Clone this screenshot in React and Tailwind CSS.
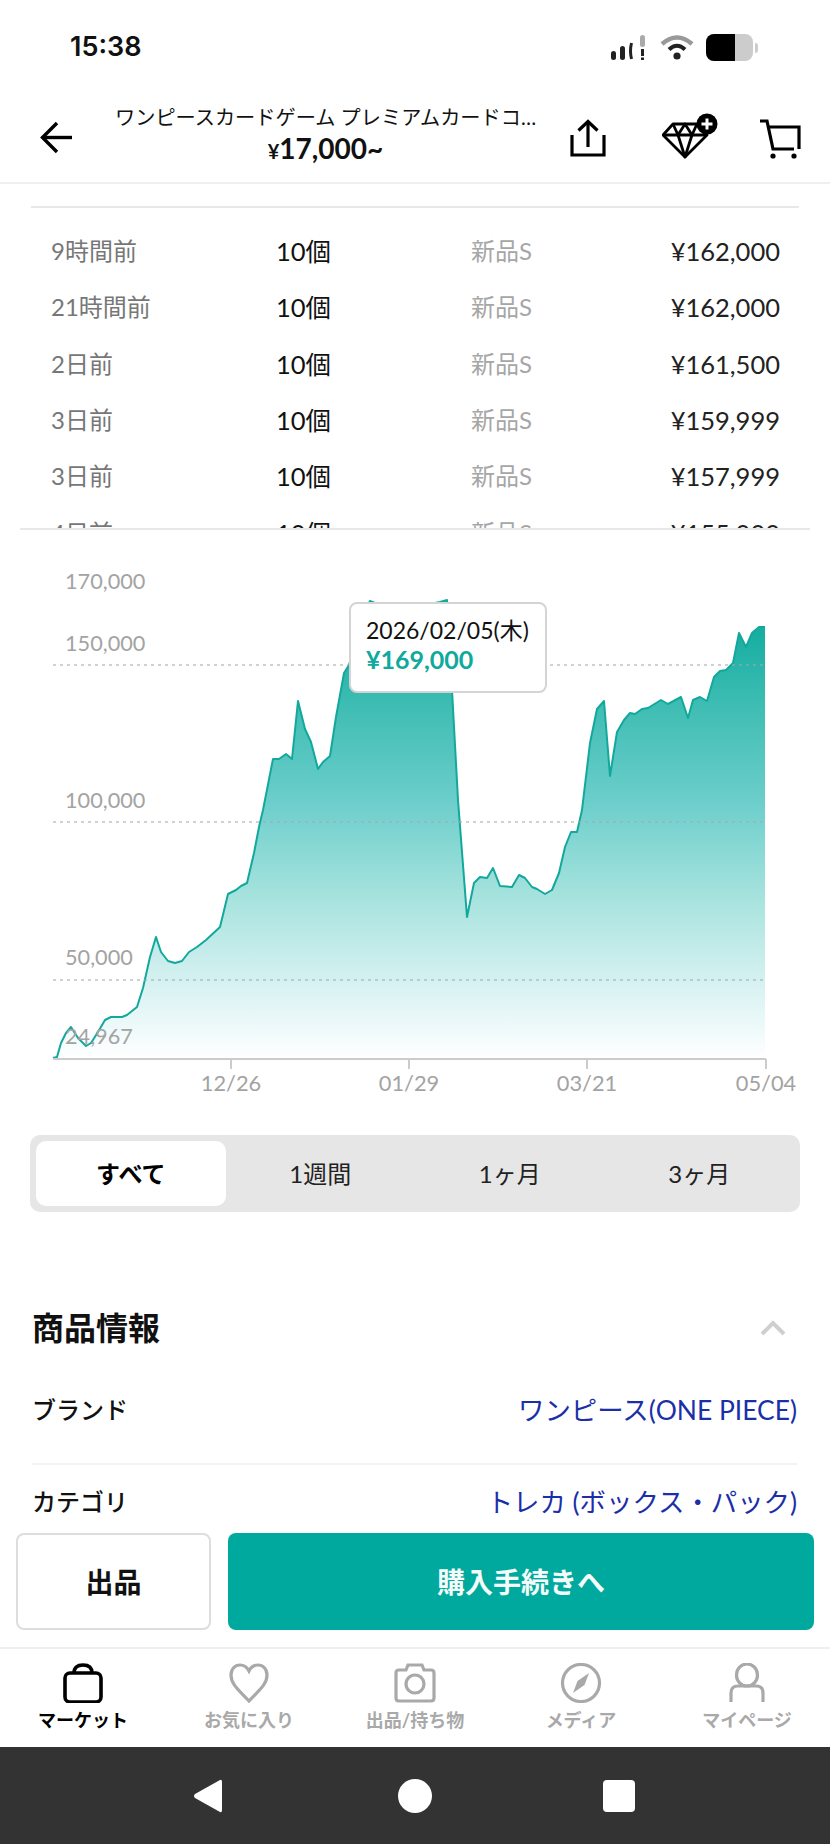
import React from "react";

// chart outline, measured in page pixels (viewBox starts at the chart's top left)
const CHART_POINTS = [
  [53, 1058], [57, 1057], [61, 1043], [66, 1033], [71, 1027], [78, 1038], [86, 1046], [91, 1043],
  [98, 1032], [105, 1020], [111, 1017], [122, 1017], [127, 1015], [137, 1007], [143, 988], [150, 957],
  [156, 937], [161, 952], [168, 961], [175, 963], [182, 961], [189, 952], [197, 947], [206, 940],
  [220, 927], [228, 894], [236, 890], [241, 886], [247, 883], [254, 853], [259, 827], [263, 810],
  [273, 759], [279, 759], [286, 754], [292, 759], [298, 701], [305, 729], [311, 742], [318, 769],
  [323, 762], [330, 756], [336, 717], [344, 673], [349, 665], [356, 640], [364, 612], [370, 601],
  [382, 606], [398, 604], [415, 606], [430, 604], [440, 602], [447, 600], [452, 690], [458, 800],
  [467, 917], [474, 883], [480, 877], [487, 878], [493, 868],
  [500, 886], [512, 887], [519, 875], [525, 878], [532, 887], [537, 889], [545, 894], [552, 890],
  [559, 873], [565, 847], [571, 832], [577, 832], [582, 810], [590, 743], [597, 709], [604, 701],
  [610, 776], [617, 732], [624, 720], [630, 713], [635, 714], [642, 709], [648, 708], [661, 700],
  [668, 704], [681, 697], [688, 718], [693, 700], [700, 697], [707, 701], [714, 677], [720, 671],
  [726, 670], [733, 663], [739, 633], [746, 647], [752, 633], [759, 627], [765, 627],
];

const CHART_LINE = CHART_POINTS.map(([x, y]) => `${x},${y}`).join(" ");
const CHART_AREA = `53,1059 ${CHART_LINE} 765,1059`;

const TRADES = [
  { time: "9時間前", qty: "10個", cond: "新品S", price: "¥162,000" },
  { time: "21時間前", qty: "10個", cond: "新品S", price: "¥162,000" },
  { time: "2日前", qty: "10個", cond: "新品S", price: "¥161,500" },
  { time: "3日前", qty: "10個", cond: "新品S", price: "¥159,999" },
  { time: "3日前", qty: "10個", cond: "新品S", price: "¥157,999" },
  { time: "4日前", qty: "10個", cond: "新品S", price: "¥155,000" },
];

const Y_LABELS = [
  { text: "170,000", y: 589 },
  { text: "150,000", y: 651 },
  { text: "100,000", y: 808 },
  { text: "50,000", y: 965 },
  { text: "24,967", y: 1044 },
];

const X_LABELS = [
  { text: "12/26", x: 231 },
  { text: "01/29", x: 409 },
  { text: "03/21", x: 587 },
  { text: "05/04", x: 766 },
];

const PERIODS = ["すべて", "1週間", "1ヶ月", "3ヶ月"];

function StatusBar() {
  return (
    <div className="flex h-[85px] shrink-0 items-start justify-between pl-[70px] pr-[72px] pt-[31px]">
      <span className="font-['Inter',sans-serif] text-[27px] font-semibold leading-[32px] text-[#111]">15:38</span>
      <div className="mt-[3px] flex items-center">
        <svg width="36" height="27" viewBox="0 0 36 27">
          <rect x="0" y="17" width="5" height="9" rx="2.5" fill="#222" />
          <rect x="9" y="12" width="5" height="14" rx="2.5" fill="#222" />
          <path d="M20.5 9 Q18.5 17 20.5 25" fill="none" stroke="#222" strokeWidth="3" />
          <rect x="29" y="1" width="5" height="12" rx="2.5" fill="#aaa" />
          <rect x="30" y="15" width="3" height="7" fill="#222" />
          <rect x="30" y="23.5" width="3" height="2.5" fill="#222" />
        </svg>
        <svg className="ml-[13px]" width="34" height="27" viewBox="0 0 34 27">
          <path d="M2 10 Q17 -3 32 10" fill="none" stroke="#999" strokeWidth="4.5" />
          <path d="M9 15.5 Q17 8 25 15.5" fill="none" stroke="#222" strokeWidth="4" />
          <circle cx="17" cy="22" r="3.6" fill="#222" />
        </svg>
        <div className="ml-[12px] flex h-[27px] w-[47px] overflow-hidden rounded-[8px] bg-[#cccccc]">
          <div className="h-full w-[29px] bg-black" />
        </div>
        <div className="ml-[2px] h-[10px] w-[3px] rounded-r-full bg-[#cccccc]" />
      </div>
    </div>
  );
}

function Header() {
  return (
    <div className="flex h-[99px] shrink-0 items-start border-b-2 border-[#efefef] pl-[40px]">
      <svg className="mt-[36px] shrink-0" width="33" height="33" viewBox="0 0 33 33" fill="none" stroke="#000" strokeWidth="3.4">
        <path d="M32 16.5H3" />
        <path d="M17 2 L2.5 16.5 L17 31" />
      </svg>
      <div className="ml-[42px] mt-[19px] w-[421px] shrink-0 text-center text-[#111]">
        <div className="whitespace-nowrap text-[20.2px] leading-[26px]">ワンピースカードゲーム プレミアムカードコ…</div>
        <div className="mt-[1px] text-[28px] font-bold leading-[34px]">
          <span className="text-[20px]">¥</span>17,000~
        </div>
      </div>
      <svg className="ml-[33px] mt-[34px] shrink-0" width="38" height="38" viewBox="0 0 38 38" fill="none" stroke="#000" strokeWidth="3.2">
        <path d="M3 16V36H35V16" />
        <path d="M19 28V3" />
        <path d="M9.5 11.5 L19 2.5 L28.5 11.5" />
      </svg>
      <svg className="ml-[55px] mt-[28px] shrink-0" width="56" height="46" viewBox="0 0 56 46">
        <g fill="none" stroke="#000" strokeWidth="2.8" strokeLinejoin="round">
          <path d="M11 11 H35 L45 22 L23 44 L1 22 Z" />
          <path d="M1 22 H45" />
          <path d="M11 11 L16 22 L23 44 L30 22 L35 11" />
          <path d="M16 22 L23 11 L30 22" />
        </g>
        <circle cx="45" cy="11" r="10.5" fill="#000" />
        <path d="M45 5.5V16.5M39.5 11H50.5" stroke="#fff" strokeWidth="3" />
      </svg>
      <svg className="ml-[41px] mt-[33px] shrink-0" width="42" height="42" viewBox="0 0 42 42" fill="none" stroke="#000" strokeWidth="3.2">
        <path d="M1 3H8L14 31H35" />
        <path d="M9 9H40V31" />
        <circle cx="14" cy="38" r="2.6" fill="#000" stroke="none" />
        <circle cx="35" cy="38" r="2.6" fill="#000" stroke="none" />
      </svg>
    </div>
  );
}

function TradeTable() {
  return (
    <>
      <div className="mx-[31px] mt-[22px] h-[2px] bg-[#e8e8e8]" />
      <div className="h-[320px] overflow-hidden pt-[15px]">
        {TRADES.map((row, idx) => (
          <div key={idx} className="flex h-[56.3px] items-center pl-[51px] pr-[50px] text-[24px]">
            <span className="w-[225px] text-[#777777]">{row.time}</span>
            <span className="w-[195px] text-[25.5px] text-[#111]">{row.qty}</span>
            <span className="text-[#a6a6a6]">{row.cond}</span>
            <span className="ml-auto text-[25.5px] text-[#222]">{row.price}</span>
          </div>
        ))}
      </div>
      <div className="mx-[20px] h-[2px] bg-[#e8e8e8]" />
    </>
  );
}

function PriceChart() {
  return (
    <div className="relative h-[605px]">
      <svg width="830" height="605" viewBox="0 530 830 605" className="block">
        <defs>
          <linearGradient id="chartFill" x1="0" y1="600" x2="0" y2="1059" gradientUnits="userSpaceOnUse">
            <stop offset="0.065" stopColor="#17ada2" />
            <stop offset="0.22" stopColor="#3cbcb2" />
            <stop offset="0.44" stopColor="#6ccecb" />
            <stop offset="0.65" stopColor="#a7e3de" />
            <stop offset="0.87" stopColor="#dff4f5" />
            <stop offset="1" stopColor="#ffffff" />
          </linearGradient>
        </defs>
        <polygon points={CHART_AREA} fill="url(#chartFill)" />
        <polyline points={CHART_LINE} fill="none" stroke="#13a89c" strokeWidth="2" strokeLinejoin="round" />
        {[665, 822, 980].map((y) => (
          <line key={y} x1="53" x2="765" y1={y} y2={y} stroke="#a8a8a8" strokeOpacity="0.7" strokeWidth="1.5" strokeDasharray="3 4" />
        ))}
        <path d="M53 1059H766" stroke="#cccccc" strokeWidth="2" />
        {X_LABELS.map((tick) => (
          <g key={tick.text}>
            <line x1={tick.x} x2={tick.x} y1="1059" y2="1069" stroke="#cccccc" strokeWidth="2" />
            <text x={tick.x} y="1091" textAnchor="middle" fontSize="21.8" fill="#a3a3a3">
              {tick.text}
            </text>
          </g>
        ))}
        {Y_LABELS.map((label) => (
          <text key={label.text} x="65" y={label.y} fontSize="21.7" fill="#a3a3a3">
            {label.text}
          </text>
        ))}
      </svg>
      <div className="absolute left-[349px] top-[72px] h-[91px] w-[198px] rounded-[8px] border-2 border-[#d4d4d4] bg-white pl-[15px] pt-[11px]">
        <div className="text-[23px] leading-[30px] text-[#111]">2026/02/05(木)</div>
        <div className="text-[25px] font-bold leading-[29px] text-[#0fa99d]">¥169,000</div>
      </div>
    </div>
  );
}

function PeriodTabs() {
  return (
    <div className="mx-[30px] grid h-[77px] grid-cols-4 rounded-[10px] bg-[#e6e6e6] p-[6px]">
      {PERIODS.map((label, idx) => (
        <div
          key={label}
          className={`flex items-center justify-center rounded-[10px] text-[24px] ${
            idx === 0 ? "bg-white font-bold text-black" : "text-[#222]"
          }`}
        >
          {label}
        </div>
      ))}
    </div>
  );
}

function ProductInfo() {
  return (
    <div className="ml-[32px] mr-[33px] mt-[96px]">
      <div className="flex h-[40px] items-center justify-between">
        <h2 className="text-[32px] font-bold text-[#111]">商品情報</h2>
        <svg className="mr-[11px]" width="26" height="16" viewBox="0 0 26 16" fill="none" stroke="#cfcfcf" strokeWidth="4">
          <path d="M2 14 L13 3 L24 14" />
        </svg>
      </div>
      <div className="mt-[23px] flex items-center justify-between border-b-2 border-[#f3f3f3] pb-[35px] pt-[21px] leading-[36px]">
        <span className="text-[24px] font-medium text-[#111]">ブランド</span>
        <span className="text-[26.4px] text-[#1a2fa8]">ワンピース(ONE PIECE)</span>
      </div>
      <div className="flex items-center justify-between pt-[19px] leading-[36px]">
        <span className="text-[24px] font-medium text-[#111]">カテゴリ</span>
        <span className="text-[26.4px] text-[#1a2fa8]">トレカ (ボックス・パック)</span>
      </div>
    </div>
  );
}

function ActionBar() {
  return (
    <div className="absolute bottom-0 left-0 right-0 flex h-[122px] gap-[17px] bg-white px-[16px] pb-[17px] pt-[8px]">
      <button className="w-[195px] rounded-[8px] border-2 border-[#dddddd] bg-white text-[28px] font-bold text-[#111]">出品</button>
      <button className="flex-1 rounded-[8px] bg-[#00a99d] text-[28px] font-bold text-[#f4fbfa]">購入手続きへ</button>
    </div>
  );
}

const NAV_ITEMS = [
  {
    label: "マーケット",
    active: true,
    icon: (
      <>
        <rect x="4" y="10" width="36" height="29" rx="5" strokeWidth="3.6" />
        <path d="M13 10 Q13 2 22 2 Q31 2 31 10" strokeWidth="3.6" />
      </>
    ),
  },
  {
    label: "お気に入り",
    icon: <path d="M22 38 C13 28 4 22 4 12 C4 6 8 2 13 2 C17 2 20 4 22 8 C24 4 27 2 31 2 C36 2 40 6 40 12 C40 22 31 28 22 38 Z" strokeWidth="3.2" />,
  },
  {
    label: "出品/持ち物",
    icon: (
      <>
        <path d="M3 10 Q3 7 6 7 H13 L15 2 H29 L31 7 H38 Q41 7 41 10 V35 Q41 38 38 38 H6 Q3 38 3 35 Z" strokeWidth="3.2" />
        <circle cx="22" cy="21" r="9" strokeWidth="3.2" />
      </>
    ),
  },
  {
    label: "メディア",
    icon: (
      <>
        <circle cx="22" cy="20" r="18.5" strokeWidth="3.2" />
        <path d="M30 10 L25.5 22 L14 30 L18.5 18 Z" fill="#a9a9a9" stroke="none" />
      </>
    ),
  },
  {
    label: "マイページ",
    icon: (
      <>
        <ellipse cx="22" cy="12" rx="10.5" ry="11" strokeWidth="3.2" />
        <path d="M6 39 V30 Q6 23 13 23 H31 Q38 23 38 30 V39" strokeWidth="3.2" />
      </>
    ),
  },
];

function BottomNav() {
  return (
    <div className="grid h-[100px] shrink-0 grid-cols-5 border-t-2 border-[#eeeeee] bg-white pt-[14px]">
      {NAV_ITEMS.map((item) => (
        <div key={item.label} className={`flex flex-col items-center ${item.active ? "text-black" : "text-[#a9a9a9]"}`}>
          <svg width="44" height="40" viewBox="0 0 44 40" fill="none" stroke="currentColor">
            {item.icon}
          </svg>
          <span className="mt-[5px] text-[18px] font-bold leading-[24px]">{item.label}</span>
        </div>
      ))}
    </div>
  );
}

function AndroidNav() {
  return (
    <div className="grid h-[97px] shrink-0 grid-cols-3 items-center bg-[#333333] px-[110px]">
      <svg className="mr-[8px] justify-self-center" width="32" height="36" viewBox="0 0 30 36">
        <path d="M27 2 Q29 1 29 4 V32 Q29 35 27 34 L2 20 Q0 18 2 16 Z" fill="#fff" />
      </svg>
      <div className="h-[34px] w-[34px] justify-self-center rounded-full bg-white" />
      <div className="ml-[2px] h-[32px] w-[32px] justify-self-center rounded-[4px] bg-white" />
    </div>
  );
}

export default function App() {
  return (
    <div className="flex h-[1844px] w-[830px] flex-col overflow-hidden bg-white font-[Lato,'Noto_Sans_CJK_JP',sans-serif]">
      <StatusBar />
      <Header />
      <div className="relative min-h-0 flex-1 overflow-hidden">
        <TradeTable />
        <PriceChart />
        <PeriodTabs />
        <ProductInfo />
        <ActionBar />
      </div>
      <BottomNav />
      <AndroidNav />
    </div>
  );
}
